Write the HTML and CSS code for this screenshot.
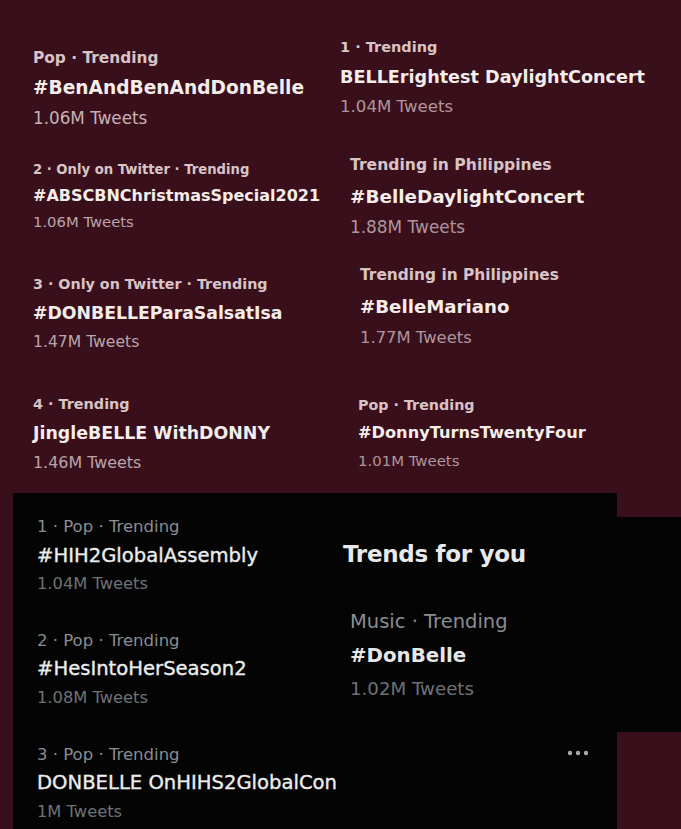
FILE: index.html
```html
<!DOCTYPE html>
<html lang="en">
<head>
<meta charset="utf-8">
<title>Trending</title>
<link rel="stylesheet" href="styles.css">
</head>
<body>
<div class="page">
  <section class="top">
    <div class="col col-left">
      <div class="trend l1">
        <div class="meta">Pop · Trending</div>
        <div class="title">#BenAndBenAndDonBelle</div>
        <div class="count">1.06M Tweets</div>
      </div>
      <div class="trend l2">
        <div class="meta">2 · Only on Twitter · Trending</div>
        <div class="title">#ABSCBNChristmasSpecial2021</div>
        <div class="count">1.06M Tweets</div>
      </div>
      <div class="trend l3">
        <div class="meta">3 · Only on Twitter · Trending</div>
        <div class="title">#DONBELLEParaSalsatIsa</div>
        <div class="count">1.47M Tweets</div>
      </div>
      <div class="trend l4">
        <div class="meta">4 · Trending</div>
        <div class="title">JingleBELLE WithDONNY</div>
        <div class="count">1.46M Tweets</div>
      </div>
    </div>
    <div class="col col-right">
      <div class="trend r1">
        <div class="meta">1 · Trending</div>
        <div class="title">BELLErightest DaylightConcert</div>
        <div class="count">1.04M Tweets</div>
      </div>
      <div class="trend r2">
        <div class="meta">Trending in Philippines</div>
        <div class="title">#BelleDaylightConcert</div>
        <div class="count">1.88M Tweets</div>
      </div>
      <div class="trend r3">
        <div class="meta">Trending in Philippines</div>
        <div class="title">#BelleMariano</div>
        <div class="count">1.77M Tweets</div>
      </div>
      <div class="trend r4">
        <div class="meta">Pop · Trending</div>
        <div class="title">#DonnyTurnsTwentyFour</div>
        <div class="count">1.01M Tweets</div>
      </div>
    </div>
  </section>
  <section class="bottom">
    <div class="panel">
      <div class="pcol pleft">
        <div class="trend dark b1">
          <div class="meta">1 · Pop · Trending</div>
          <div class="title">#HIH2GlobalAssembly</div>
          <div class="count">1.04M Tweets</div>
        </div>
        <div class="trend dark b2">
          <div class="meta">2 · Pop · Trending</div>
          <div class="title">#HesIntoHerSeason2</div>
          <div class="count">1.08M Tweets</div>
        </div>
        <div class="trend dark b3">
          <div class="meta">3 · Pop · Trending</div>
          <div class="title">DONBELLE OnHIHS2GlobalCon</div>
          <div class="count">1M Tweets</div>
        </div>
      </div>
      <div class="pcol pright">
        <h2 class="tfy">Trends for you</h2>
        <div class="trend dark bm">
          <div class="meta">Music · Trending</div>
          <div class="title">#DonBelle</div>
          <div class="count">1.02M Tweets</div>
        </div>
      </div>
      <svg class="dots" width="24" height="6" viewBox="0 0 24 6" aria-hidden="true">
        <circle cx="3" cy="3" r="2.2"/>
        <circle cx="11" cy="3" r="2.2"/>
        <circle cx="19" cy="3" r="2.2"/>
      </svg>
    </div>
    <div class="strip">
      <div class="strip-top"></div>
      <div class="strip-black"></div>
      <div class="strip-rest"></div>
    </div>
  </section>
</div>
</body>
</html>
```

FILE: styles.css
```css
* { box-sizing: border-box; }

html, body {
  margin: 0;
  padding: 0;
  background: #3a0f1c;
}

body {
  font-family: "DejaVu Sans", "Liberation Sans", sans-serif;
  width: 681px;
  height: 829px;
  overflow: hidden;
}

.page {
  width: 681px;
  height: 829px;
  display: flex;
  flex-direction: column;
  background: #3a0f1c;
}

/* ---------- maroon top ---------- */
.top {
  height: 493px;
  display: flex;
  flex: none;
}

.col {
  display: flex;
  flex-direction: column;
  align-items: flex-start;
}

.col-left {
  width: 340px;
  padding-left: 33px;
}

.col-right {
  flex: 1;
}

.trend {
  --lh: 30px;
  --t: 18px;
  --m: 15px;
  --c: 16px;
  white-space: nowrap;
}

.trend .meta,
.trend .title,
.trend .count {
  line-height: var(--lh);
}

.trend .meta {
  font-size: var(--m);
  font-weight: 700;
  color: #d8c4c6;
}

.trend .title {
  font-size: var(--t);
  font-weight: 700;
  color: #f4ede9;
}

.trend .count {
  font-size: var(--c);
  font-weight: 400;
  color: #c6b3b6;
}

.l1 { --t: 18.6px; --m: 15.4px; --c: 16.8px; --lh: 30px; margin-top: 43px; }
.l2 { --t: 16px;   --m: 13.2px; --c: 14.8px; --lh: 26px; margin-top: 24px; }
.l3 { --t: 17.3px; --m: 14.3px; --c: 15.6px; --lh: 29px; margin-top: 35px; }
.l4 { --t: 17.4px; --m: 14.4px; --c: 15.9px; --lh: 29px; margin-top: 33px; }

.r1 { --t: 17.6px; --m: 14.5px; --c: 16.6px; --lh: 30px; margin-top: 32px; }
.r2 { --t: 18.4px; --m: 15.6px; --c: 16.9px; --lh: 31px; margin-top: 28px; margin-left: 10px; }
.r3 { --t: 18.2px; --m: 15.4px; --c: 16.4px; --lh: 31px; margin-top: 17px; margin-left: 20px; }
.r4 { --t: 16.2px; --m: 14.3px; --c: 14.9px; --lh: 28px; margin-top: 38px; margin-left: 18px; }

.r1 .count, .r2 .count, .r3 .count, .r4 .count { color: #ad969b; }
.l2 .count, .l3 .count, .l4 .count { color: #b9a5a9; }

/* ---------- bottom ---------- */
.bottom {
  flex: 1;
  display: flex;
}

.panel {
  position: relative;
  width: 604px;
  margin-left: 13px;
  background: #040404;
  display: flex;
  flex: none;
}

.pcol {
  display: flex;
  flex-direction: column;
  align-items: flex-start;
}

.pleft {
  width: 330px;
  padding-left: 24px;
  padding-top: 20px;
}

.pright {
  flex: 1;
  padding-top: 46px;
}

.trend.dark .meta {
  font-weight: 400;
  color: #8a8d91;
}

.trend.dark .title {
  font-weight: 400;
  color: #eceded;
  -webkit-text-stroke: 0.35px #eceded;
}

.trend.dark .count {
  color: #6e7276;
}

.b1, .b2, .b3 { --t: 19.6px; --m: 16.5px; --c: 16.3px; --lh: 28.5px; }
.b2 { margin-top: 28px; }
.b3 { margin-top: 28.5px; }

.tfy {
  margin: 0;
  font-size: 23px;
  letter-spacing: -0.3px;
  line-height: 30px;
  font-weight: 700;
  color: #e7e9ea;
}

.bm {
  --t: 19.8px;
  --m: 19.5px;
  --c: 18.2px;
  --lh: 33.5px;
  margin-top: 36px;
  margin-left: 7px;
}
.trend.bm .title { font-weight: 700; -webkit-text-stroke: 0; color: #e6e7e8; }

.dots {
  position: absolute;
  left: 554px;
  top: 257px;
  fill: #a7a9ac;
}

.strip {
  flex: 1;
  display: flex;
  flex-direction: column;
}

.strip-top { height: 24px; background: #3a0f1c; }
.strip-black { height: 215px; background: #040404; }
.strip-rest { flex: 1; background: #3a0f1c; }
```
